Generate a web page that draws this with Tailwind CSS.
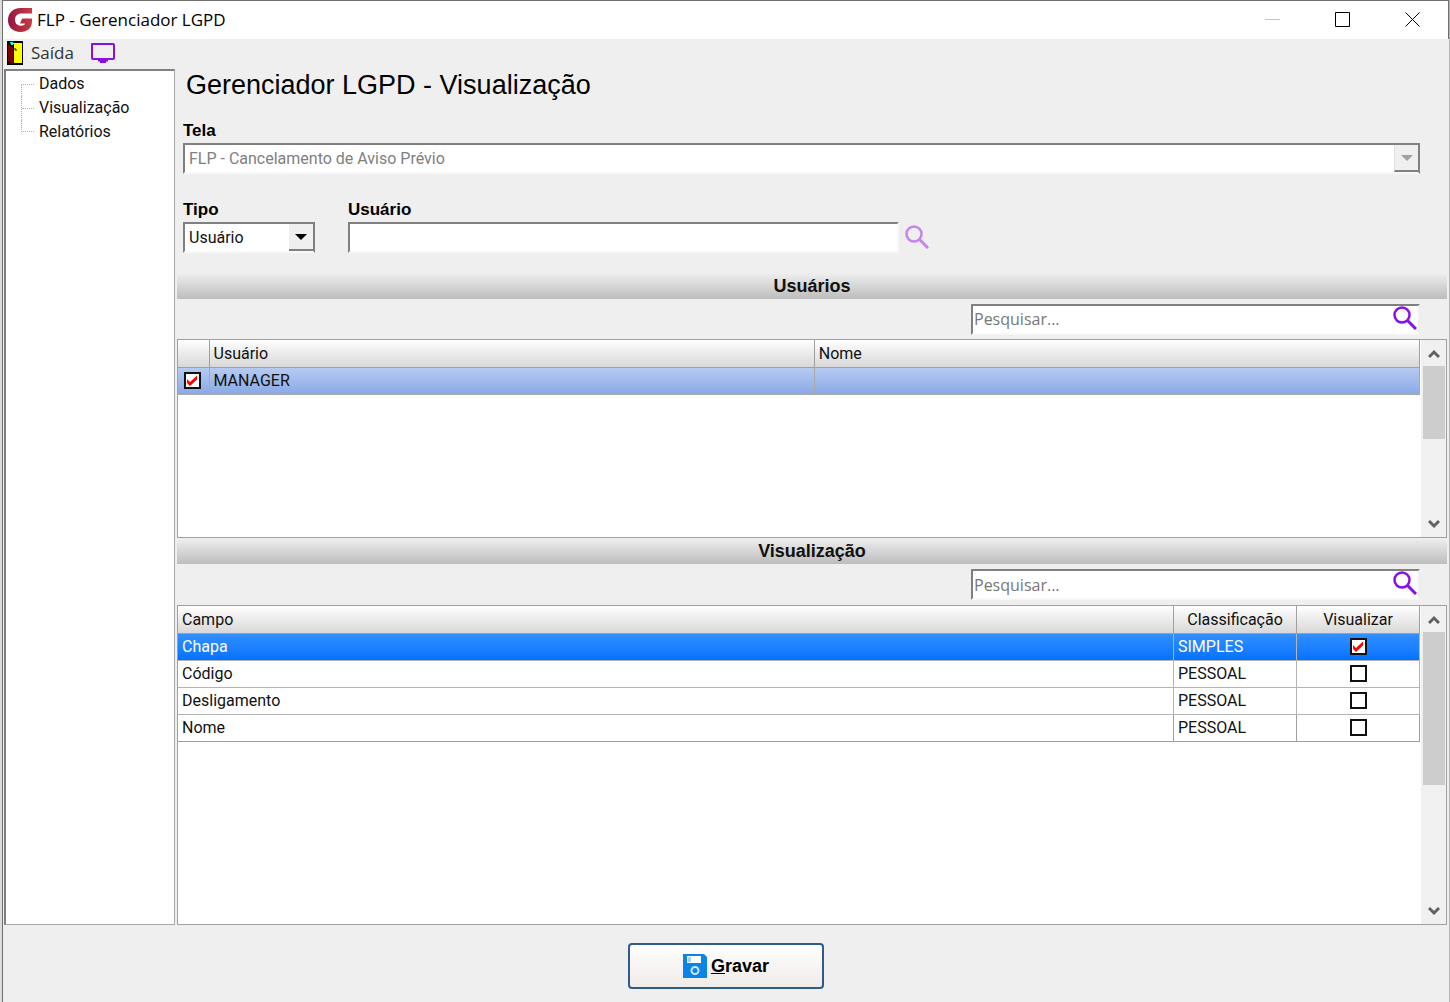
<!DOCTYPE html>
<html lang="pt-BR">
  <head>
    <meta charset="UTF-8" />
    <meta name="viewport" content="width=device-width, initial-scale=1.0" />
    <title>FLP - Gerenciador LGPD</title>
    <script src="https://cdn.jsdelivr.net/npm/@tailwindcss/browser@4"></script>
  </head>
  <body class="bg-[#efefef] font-['Roboto','Liberation_Sans',sans-serif] text-base text-[#111]">
    <div class="border-l-2 border-r border-l-[#dcdcdc] border-r-[#b5b5b5]">
      <div class="flex min-h-screen flex-col border-t border-l border-[#707070]">
        <!-- Title bar -->
        <header class="flex h-[38px] items-center border-r border-[#707070] bg-white pl-[5px]">
          <svg class="size-6" viewBox="0 0 24 24">
            <defs>
              <linearGradient id="logo" x1="0" x2="1">
                <stop offset="0" stop-color="#96153f" />
                <stop offset="1" stop-color="#c93a45" />
              </linearGradient>
            </defs>
            <path
              fill="url(#logo)"
              d="M24 0v5.500H13.500C9.500 5.500 7 8 7 11.700c0 3.800 2.600 6 6 6 2.200 0 3.700-.8 4.300-2.200H12l2.200-5H24v2.500C24 20 19.500 24 12.500 24 5 24 0 19.300 0 12.300 0 5 5 0 12.500 0z"
            />
          </svg>
          <span class="ml-[5px] font-['Open_Sans','Noto_Sans',sans-serif] text-[17px] text-black">FLP - Gerenciador LGPD</span>
          <div class="ml-auto flex text-black">
            <button class="flex w-[70px] justify-center text-[#c4c4c4]" aria-label="Minimizar">
              <svg class="size-4" viewBox="0 0 16 16" stroke="currentColor"><path d="M0 7.500h15" /></svg>
            </button>
            <button class="flex w-[70px] justify-center" aria-label="Maximizar">
              <svg class="size-4" viewBox="0 0 16 16" fill="none" stroke="currentColor"><path d="M.5.5h14v14H.5z" /></svg>
            </button>
            <button class="flex w-[70px] justify-center" aria-label="Fechar">
              <svg class="size-4" viewBox="0 0 16 16" stroke="currentColor"><path d="M.5.5l14 14M14.500.5l-14 14" /></svg>
            </button>
          </div>
        </header>

        <!-- Toolbar -->
        <nav class="flex h-[30px] items-center pb-[2px] pl-1">
          <button class="flex items-center gap-2 font-['Open_Sans','Noto_Sans',sans-serif] text-[17px] text-[#333]">
            <svg class="h-6 w-4" viewBox="0 0 16 24">
              <path fill="#000" d="M0 0h16v24H0z" />
              <path fill="#ff0" d="M6 2h9v20H6z" />
              <path fill="#7d0000" d="M1 3l5 4v16L1 20z" />
              <path fill="#0ff" d="M3 1h3v3H4z" />
              <path fill="none" stroke="#000" d="M6.500 3v19M7 8h2v2" />
            </svg>
            Saída
          </button>
          <button class="ml-4" aria-label="Tela">
            <svg class="h-5 w-[26px]" viewBox="0 0 26 20">
              <path fill="none" stroke="#8a0ee8" stroke-width="2" stroke-linejoin="round" d="M2 1h21q1 0 1 1v13q0 1-1 1H3q-1 0-1-1z" />
              <path fill="#8a0ee8" d="M8 16h10v2.500h-2V20h-6v-1.500H8z" />
            </svg>
          </button>
        </nav>

        <div class="flex flex-1 gap-[2px] pr-[2px] pl-px">
          <!-- Navigation tree -->
          <aside class="w-[171px] shrink-0 border border-t-2 border-l-2 border-[#a8a8a8] border-t-[#808080] border-l-[#808080] bg-white pt-px pl-[15px]">
            <ul class="leading-6">
              <li class="flex">
                <span class="mt-3 h-3 w-[13px] border-t border-l border-dotted border-[#b0b0b0]"></span>
                <a href="#" class="ml-[5px]">Dados</a>
              </li>
              <li class="flex">
                <span class="w-px border-l border-dotted border-[#b0b0b0]"></span>
                <span class="mt-3 w-3 border-t border-dotted border-[#b0b0b0]"></span>
                <a href="#" class="ml-[5px]">Visualização</a>
              </li>
              <li class="flex">
                <span class="h-3 w-[13px] border-b border-l border-dotted border-[#b0b0b0]"></span>
                <a href="#" class="ml-[5px]">Relatórios</a>
              </li>
            </ul>
          </aside>

          <main class="flex min-w-0 flex-1 flex-col">
            <!-- Filters -->
            <div class="pr-[27px] pl-[6px]">
              <h1 class="pl-[3px] font-['Liberation_Sans',sans-serif] text-[27px] leading-8 text-black">Gerenciador LGPD - Visualização</h1>
              <label for="tela" class="mt-[17px] block font-['Liberation_Sans',sans-serif] text-[17px] leading-[25px] font-bold text-black">Tela</label>
              <div class="flex h-[31px] border-2 border-t-[#808080] border-r-[#808080] border-b-[#f8f8f8] border-l-[#808080] bg-white">
                <select id="tela" disabled class="min-w-0 flex-1 appearance-none pl-1 text-[#808080] opacity-100">
                  <option>FLP - Cancelamento de Aviso Prévio</option>
                </select>
                <span class="flex w-6 items-center justify-center border-b-2 border-l border-b-[#808080] border-l-[#e0e0e0] bg-[#efefef]">
                  <svg class="h-[6px] w-3" viewBox="0 0 12 6"><path fill="#a0a0a0" d="M0 0h12L6 6z" /></svg>
                </span>
              </div>
              <div class="mt-[23px] flex">
                <div class="w-[132px]">
                  <label for="tipo" class="block font-['Liberation_Sans',sans-serif] text-[17px] leading-[25px] font-bold text-black">Tipo</label>
                  <div class="relative h-[31px] border-2 border-t-[#808080] border-r-[#808080] border-b-[#f8f8f8] border-l-[#808080] bg-white">
                    <select id="tipo" class="h-full w-full appearance-none pl-1">
                      <option>Usuário</option>
                    </select>
                    <span class="pointer-events-none absolute inset-y-0 right-0 flex w-6 items-center justify-center border-b-2 border-[#808080] bg-[#efefef]">
                      <svg class="h-[6px] w-3" viewBox="0 0 12 6"><path d="M0 0h12L6 6z" /></svg>
                    </span>
                  </div>
                </div>
                <div class="ml-[33px] w-[551px]">
                  <label for="usuario" class="block font-['Liberation_Sans',sans-serif] text-[17px] leading-[25px] font-bold text-black">Usuário</label>
                  <input id="usuario" type="text" class="block h-[31px] w-full border-2 border-t-[#808080] border-r-[#f8f8f8] border-b-[#f8f8f8] border-l-[#808080] bg-white px-1" />
                </div>
                <button class="mt-7 ml-[6px] size-6" aria-label="Buscar usuário">
                  <svg viewBox="0 0 24 24" fill="none" stroke="#c583f3">
                    <circle cx="9" cy="9" r="7.500" stroke-width="2.500" />
                    <path stroke-width="3" d="M14.500 14.500l8.500 8.500" />
                  </svg>
                </button>
              </div>
            </div>

            <!-- Users -->
            <h2 class="mt-5 h-[26px] bg-linear-to-b from-[#efefef] to-[#bdbdbd] text-center font-['Liberation_Sans',sans-serif] text-lg leading-[26px] font-bold">Usuários</h2>
            <div class="flex h-10 items-center justify-end pr-[27px]">
              <div class="flex h-[31px] w-[449px] border-2 border-t-[#808080] border-r-[#f0f0f0] border-b-[#f8f8f8] border-l-[#808080] bg-white">
                <input type="text" placeholder="Pesquisar..." aria-label="Pesquisar usuários" class="min-w-0 flex-1 pl-px font-['Open_Sans','Noto_Sans',sans-serif] placeholder:text-[#777]" />
                <button class="mr-px size-6" aria-label="Pesquisar">
                  <svg viewBox="0 0 24 24" fill="none" stroke="#8a0ee8">
                    <circle cx="9" cy="9" r="7.500" stroke-width="2.500" />
                    <path stroke-width="3" d="M14.500 14.500l8.500 8.500" />
                  </svg>
                </button>
              </div>
            </div>
            <div class="flex h-[199px] border border-[#a0a0a0] bg-white">
              <div class="flex-1">
                <table class="w-full table-fixed border-collapse">
                  <thead>
                    <tr class="h-[27px] bg-linear-to-b from-white to-[#d8d8d8] text-left">
                      <th class="w-[31px] border-r border-b border-[#a0a0a0]"></th>
                      <th class="border-r border-b border-[#a0a0a0] pt-[2px] pl-1 font-normal">Usuário</th>
                      <th class="border-r border-b border-[#a0a0a0] pt-[2px] pl-1 font-normal">Nome</th>
                    </tr>
                  </thead>
                  <tbody>
                    <tr class="h-[27px] bg-linear-to-b from-[#b7ccf1] to-[#8aa9e5]">
                      <td class="border-r border-b border-[#a8a8a8]">
                        <span class="ml-[6px] grid size-[17px]">
                          <input type="checkbox" checked aria-label="MANAGER" class="col-start-1 row-start-1 size-[17px] appearance-none border-2 border-[#111] bg-white" />
                          <svg class="pointer-events-none col-start-1 row-start-1 size-[17px]" viewBox="0 0 17 17"><path fill="#f00" d="M3 7l3 3 7-6.500v4L6 14 3 11z" /></svg>
                        </span>
                      </td>
                      <td class="border-r border-b border-[#a8a8a8] pl-1">MANAGER</td>
                      <td class="border-r border-b border-[#a8a8a8]"></td>
                    </tr>
                  </tbody>
                </table>
              </div>
              <div class="ml-px flex w-[25px] flex-col items-center bg-[#f0f0f0]">
                <svg class="h-[26px] w-3 shrink-0" viewBox="0 0 12 26" fill="none" stroke="#606060" stroke-width="3"><path d="M1 17l5-5 5 5" /></svg>
                <div class="h-[73px] w-[22px] bg-[#cdcdcd]"></div>
                <svg class="mt-auto h-[26px] w-3 shrink-0" viewBox="0 0 12 26" fill="none" stroke="#606060" stroke-width="3"><path d="M1 10l5 5 5-5" /></svg>
              </div>
            </div>

            <!-- Fields -->
            <h2 class="h-[26px] bg-linear-to-b from-[#efefef] to-[#bdbdbd] text-center font-['Liberation_Sans',sans-serif] text-lg leading-[26px] font-bold">Visualização</h2>
            <div class="flex h-[41px] items-center justify-end pr-[27px]">
              <div class="flex h-[31px] w-[449px] border-2 border-t-[#808080] border-r-[#f0f0f0] border-b-[#f8f8f8] border-l-[#808080] bg-white">
                <input type="text" placeholder="Pesquisar..." aria-label="Pesquisar campos" class="min-w-0 flex-1 pl-px font-['Open_Sans','Noto_Sans',sans-serif] placeholder:text-[#777]" />
                <button class="mr-px size-6" aria-label="Pesquisar">
                  <svg viewBox="0 0 24 24" fill="none" stroke="#8a0ee8">
                    <circle cx="9" cy="9" r="7.500" stroke-width="2.500" />
                    <path stroke-width="3" d="M14.500 14.500l8.500 8.500" />
                  </svg>
                </button>
              </div>
            </div>
            <div class="flex flex-1 border border-[#a0a0a0] bg-white">
              <div class="flex-1">
                <table class="w-full table-fixed border-collapse">
                  <thead>
                    <tr class="h-[27px] bg-linear-to-b from-white to-[#d8d8d8] text-left">
                      <th class="border-r border-b border-[#a0a0a0] pt-[2px] pl-1 font-normal">Campo</th>
                      <th class="w-[123px] border-r border-b border-[#a0a0a0] pt-[2px] text-center font-normal">Classificação</th>
                      <th class="w-[123px] border-r border-b border-[#a0a0a0] pt-[2px] text-center font-normal">Visualizar</th>
                    </tr>
                  </thead>
                  <tbody>
                    <tr class="h-[27px] bg-linear-to-b from-[#3390ff] to-[#0072ff] text-white">
                      <td class="border-r border-b border-[#b4b4b4] pl-1">Chapa</td>
                      <td class="border-r border-b border-[#b4b4b4] pl-1">SIMPLES</td>
                      <td class="border-r border-b border-[#b4b4b4]">
                        <span class="mx-auto grid size-[17px]">
                          <input type="checkbox" checked aria-label="Visualizar Chapa" class="col-start-1 row-start-1 size-[17px] appearance-none border-2 border-[#111] bg-white" />
                          <svg class="pointer-events-none col-start-1 row-start-1 size-[17px]" viewBox="0 0 17 17"><path fill="#f00" d="M3 7l3 3 7-6.500v4L6 14 3 11z" /></svg>
                        </span>
                      </td>
                    </tr>
                    <tr class="h-[27px]">
                      <td class="border-r border-b border-[#b4b4b4] pl-1">Código</td>
                      <td class="border-r border-b border-[#b4b4b4] pl-1">PESSOAL</td>
                      <td class="border-r border-b border-[#b4b4b4]">
                        <input type="checkbox" aria-label="Visualizar Código" class="mx-auto block size-[17px] appearance-none border-2 border-[#111] bg-white" />
                      </td>
                    </tr>
                    <tr class="h-[27px]">
                      <td class="border-r border-b border-[#b4b4b4] pl-1">Desligamento</td>
                      <td class="border-r border-b border-[#b4b4b4] pl-1">PESSOAL</td>
                      <td class="border-r border-b border-[#b4b4b4]">
                        <input type="checkbox" aria-label="Visualizar Desligamento" class="mx-auto block size-[17px] appearance-none border-2 border-[#111] bg-white" />
                      </td>
                    </tr>
                    <tr class="h-[27px]">
                      <td class="border-r border-b border-[#a0a0a0] pl-1">Nome</td>
                      <td class="border-r border-b border-[#a0a0a0] pl-1">PESSOAL</td>
                      <td class="border-r border-b border-[#a0a0a0]">
                        <input type="checkbox" aria-label="Visualizar Nome" class="mx-auto block size-[17px] appearance-none border-2 border-[#111] bg-white" />
                      </td>
                    </tr>
                  </tbody>
                </table>
              </div>
              <div class="ml-px flex w-[25px] flex-col items-center bg-[#f0f0f0]">
                <svg class="h-[26px] w-3 shrink-0" viewBox="0 0 12 26" fill="none" stroke="#606060" stroke-width="3"><path d="M1 17l5-5 5 5" /></svg>
                <div class="h-[153px] w-[22px] bg-[#cdcdcd]"></div>
                <svg class="mt-auto h-[26px] w-3 shrink-0" viewBox="0 0 12 26" fill="none" stroke="#606060" stroke-width="3"><path d="M1 10l5 5 5-5" /></svg>
              </div>
            </div>
          </main>
        </div>

        <footer class="flex h-[77px] items-center justify-center pt-1">
          <button class="flex h-[46px] w-[196px] items-center justify-center gap-1 rounded-sm border-2 border-[#2d5c8c] bg-linear-to-b from-white to-[#efebe8] font-['Liberation_Sans',sans-serif] text-lg font-bold text-black">
            <svg class="size-6" viewBox="0 0 24 24">
              <path fill="#0a84e8" d="M0 0h21l3 3v21H0z" />
              <path fill="#fff" d="M4 2h14v7H4z" />
              <path fill="#9fd0f8" d="M5 3h3v5H5z" />
              <circle cx="12" cy="16.500" r="3.500" fill="none" stroke="#cfe7fb" stroke-width="2" />
            </svg>
            <span><u>G</u>ravar</span>
          </button>
        </footer>
      </div>
    </div>
  </body>
</html>
